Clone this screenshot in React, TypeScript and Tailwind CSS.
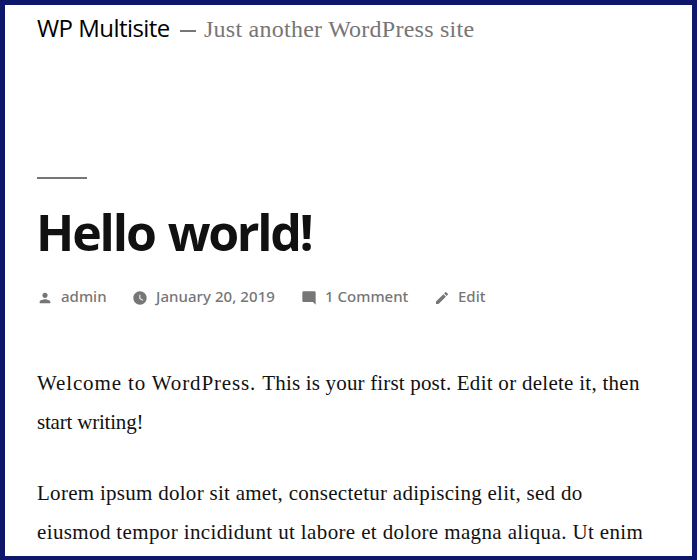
import React from "react";

const sans = "font-['Open_Sans','Noto_Sans',sans-serif]";
const meta = "font-['Noto_Sans','Open_Sans',sans-serif]";
const serif = "font-['Liberation_Serif',serif]";

function Icon({ d }: { d: string }) {
  return (
    <svg viewBox="0 0 24 24" className="mt-[3px] h-4 w-4 shrink-0 fill-current">
      <path d={d} />
    </svg>
  );
}

export default function App() {
  return (
    <div className="h-[560px] w-[697px] overflow-hidden border-[5px] border-b-4 border-[#0f176b] bg-white pl-8 text-[#111]">
      <header className="flex h-[46px] items-baseline whitespace-nowrap leading-[46px]">
        <span className={`${sans} w-[133px] text-[24px] tracking-[-0.55px] text-black`}>WP Multisite</span>
        <span className="ml-2.5 mr-2 h-0.5 w-4 -translate-y-[5px] bg-[#767676]" />
        <span className={`${serif} text-[24px] tracking-[0.25px] text-[#767676]`}>Just another WordPress site</span>
      </header>

      <main>
        <div className="mt-[126px] h-0.5 w-[50px] bg-[#767676]" />
        <h1 className={`${sans} -ml-px mt-[21px] h-16 whitespace-nowrap text-[50px] font-bold leading-[64px] tracking-[-2.1px]`}>
          Hello <span className="ml-0.5 tracking-[-2.3px]">world!</span>
        </h1>
        <div className={`${meta} mt-5 flex h-6 items-center whitespace-nowrap text-[15px] font-medium leading-6 text-[#767676]`}>
          <div className="flex w-[95px] items-center gap-2">
            <Icon d="M12 12c2.21 0 4-1.79 4-4s-1.79-4-4-4-4 1.79-4 4 1.79 4 4 4zm0 2c-2.67 0-8 1.34-8 4v2h16v-2c0-2.66-5.33-4-8-4z" />
            <span>admin</span>
          </div>
          <div className="flex w-[169px] items-center gap-2">
            <Icon d="M12 2C6.5 2 2 6.5 2 12s4.5 10 10 10 10-4.5 10-10S17.5 2 12 2zm4.2 14.2L11 13V7h1.5v5.2l4.5 2.7-.8 1.3z" />
            <span className="tracking-[0.06px]">January 20, 2019</span>
          </div>
          <div className="flex w-[133px] items-center gap-2">
            <Icon d="M21.99 4c0-1.1-.89-2-1.99-2H4c-1.1 0-2 .9-2 2v12c0 1.1.9 2 2 2h14l4 4-.01-18z" />
            <span>1 Comment</span>
          </div>
          <div className="flex items-center gap-2">
            <Icon d="M3 17.25V21h3.75L17.81 9.94l-3.75-3.75L3 17.25zM20.71 7.04c.39-.39.39-1.02 0-1.41l-2.34-2.34c-.39-.39-1.02-.39-1.41 0l-1.83 1.83 3.75 3.75 1.83-1.83z" />
            <span>Edit</span>
          </div>
        </div>

        <div className={`${serif} mt-[56px] whitespace-nowrap text-[21px] leading-[39px]`}>
          <p className="mb-8">
            <span className="block tracking-[0.27px]"><span className="tracking-[0.87px]">Welcome to WordPress. </span><span className="tracking-[0.17px]">This is your first post. </span>Edit or delete it, then</span>
            <span className="block tracking-[-0.2px]">start writing!</span>
          </p>
          <p>
            <span className="block tracking-[0.28px]">Lorem ipsum dolor sit amet, consectetur adipiscing elit, sed do</span>
            <span className="block tracking-[0.37px]">eiusmod tempor incididunt ut labore et dolore magna aliqua. Ut enim</span>
          </p>
        </div>
      </main>
    </div>
  );
}
